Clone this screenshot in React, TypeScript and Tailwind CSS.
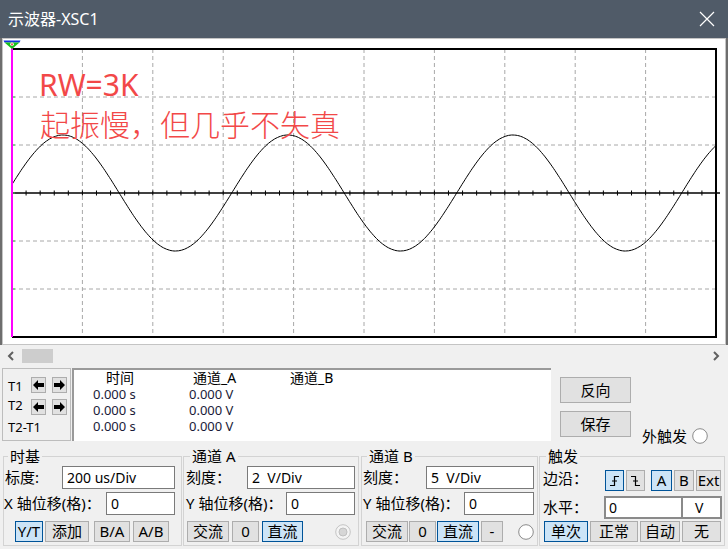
import React from 'react';

// page coordinates of the scope graticule
const GX0 = 12;
const GX1 = 716;
const GY0 = 49;
const GY1 = 337;
const DIVX = (GX1 - GX0) / 10;
const DIVY = (GY1 - GY0) / 6;

function sinePath() {
  const pts: string[] = [];
  for (let x = GX0; x <= GX1; x += 1.5) {
    const y = 193 - 58 * Math.sin((2 * Math.PI * (x - 6.7)) / 225);
    pts.push(`${x.toFixed(1)},${y.toFixed(1)}`);
  }
  return 'M' + pts.join(' L');
}

const Btn: React.FC<{ w: string; active?: boolean; className?: string; children: React.ReactNode }> = ({
  w,
  active,
  className = '',
  children,
}) => (
  <div
    className={`${w} h-[21px] flex items-center justify-center border text-[15px] leading-none ${
      active ? 'bg-[#cce4f7] border-[#005499]' : 'bg-[#e1e1e1] border-[#adadad]'
    } ${className}`}
  >
    {children}
  </div>
);

const Box: React.FC<{ w: string; children: React.ReactNode }> = ({ w, children }) => (
  <div className={`${w} h-[23px] bg-white border border-[#7a7a7a] flex items-center pl-[4px] text-[14px]`}>
    {children}
  </div>
);

const Radio: React.FC<{ disabled?: boolean; className?: string }> = ({ disabled, className = '' }) => (
  <svg width="16" height="16" viewBox="0 0 16 16" className={className}>
    <circle cx="8" cy="8" r="7.3" fill={disabled ? '#f4f4f4' : '#ffffff'} stroke={disabled ? '#c4c4c4' : '#8a8a8a'} />
    {disabled && <circle cx="8" cy="8" r="4" fill="#d6d6d6" stroke="#c0c0c0" />}
  </svg>
);

const Arrow: React.FC<{ dir: 'l' | 'r' }> = ({ dir }) => (
  <div className="w-[15px] h-[16px] bg-[#e1e1e1] border border-[#adadad] flex items-center justify-center">
    <svg width="11" height="10" viewBox="0 0 11 10">
      {dir === 'l' ? (
        <path d="M0 5 L5 0 L5 3 L11 3 L11 7 L5 7 L5 10 Z" fill="#000" />
      ) : (
        <path d="M11 5 L6 0 L6 3 L0 3 L0 7 L6 7 L6 10 Z" fill="#000" />
      )}
    </svg>
  </div>
);

const Scope: React.FC = () => {
  const vx = Array.from({ length: 9 }, (_, i) => GX0 + DIVX * (i + 1));
  const hy = [1, 2, 4, 5].map((i) => GY0 + DIVY * i);
  const ticks = Array.from({ length: 51 }, (_, i) => GX0 + (DIVX / 5) * i);
  return (
    <svg width="722" height="305" className="block">
      <g transform="translate(-3,-39)">
        {vx.map((x) => (
          <line key={x} x1={x} y1={GY0} x2={x} y2={GY1} stroke="#a8a8a8" strokeDasharray="4 3" />
        ))}
        {hy.map((y) => (
          <line key={y} x1={GX0} y1={y} x2={GX1} y2={y} stroke="#a8a8a8" strokeDasharray="4 3" />
        ))}
        <line x1={GX0} y1={193} x2={720} y2={193} stroke="#000" strokeWidth="1.6" />
        {ticks.map((x) => (
          <line key={x} x1={x} y1={190.5} x2={x} y2={195.5} stroke="#000" />
        ))}
        <path d={sinePath()} fill="none" stroke="#000" strokeWidth="1" />
        <line x1={GX0} y1={GY0} x2={GX1 + 1} y2={GY0} stroke="#000" strokeWidth="2" />
        <line x1={GX1} y1={GY0} x2={GX1} y2={GY1} stroke="#000" strokeWidth="2" />
        <line x1={GX0} y1={GY1} x2={GX1 + 1} y2={GY1} stroke="#000" strokeWidth="2" />
        {hy.concat([193]).map((y) => (
          <line key={'g' + y} x1={GX0} y1={y} x2={GX0 + 3} y2={y} stroke="#2ecc40" strokeWidth="1" />
        ))}
        <line x1={GX0} y1={43} x2={GX0} y2={GY1} stroke="#ff00ff" strokeWidth="2" />
        <path d="M3.5 40.5 L20.5 40.5 L19.5 42.5 L4.5 42.5 Z" fill="#1030e0" />
        <path d="M4.5 42.5 L19.5 42.5 L12 49 Z" fill="#18c018" />
        <circle cx="12" cy="44.3" r="1.8" fill="#ffffff" />
        <rect x="11.3" y="43.4" width="1.4" height="2" fill="#e02020" />
      </g>
    </svg>
  );
};

const App: React.FC = () => {
  return (
    <div className="w-[728px] h-[549px] overflow-hidden bg-[#f0f0f0] text-black font-['Noto_Sans','Noto_Sans_CJK_SC',sans-serif]">
      {/* Title bar */}
      <div className="h-[38px] bg-[#505b68] flex items-center justify-between pl-[8px] pr-[13px]">
        <span className="text-white text-[16px] leading-none">示波器-XSC1</span>
        <svg width="16" height="16" viewBox="0 0 16 16">
          <path d="M1 1 L15 15 M15 1 L1 15" stroke="#ffffff" strokeWidth="1.2" />
        </svg>
      </div>

      {/* Plot */}
      <div className="h-[307px] border-x-2 border-[#6e6e6e]">
        <div className="relative h-full border border-[#c4c4c4] bg-white">
          <Scope />
          <div className="absolute left-[36px] top-[31px] text-[#f24848] text-[30px] leading-[30px]">RW=3K</div>
          <div className="absolute left-[37px] top-[69px] text-[#f24848] text-[30px] leading-[30px] font-light font-['Noto_Sans_CJK_SC',sans-serif]">
            起振慢，但几乎不失真
          </div>
        </div>
      </div>

      {/* Scrollbar */}
      <div className="h-[22px] flex items-center">
        <svg width="22" height="14" viewBox="0 0 22 14">
          <path d="M13 3 L9 7 L13 11" fill="none" stroke="#606060" strokeWidth="2" />
        </svg>
        <div className="w-[31px] h-[14px] bg-[#cdcdcd]" />
        <div className="flex-1" />
        <svg width="22" height="14" viewBox="0 0 22 14">
          <path d="M8 3 L12 7 L8 11" fill="none" stroke="#606060" strokeWidth="2" />
        </svg>
      </div>

      {/* Cursor readout */}
      <div className="h-[79px] pt-[1px] flex">
        <div className="ml-[2px] w-[69px] h-[73px] border border-[#bdbdbd] pt-[8px] text-[13px] leading-none">
          <div className="flex items-center h-[16px]">
            <span className="w-[28px] pl-[5px] mt-[3px]">T1</span>
            <Arrow dir="l" />
            <div className="w-[6px]" />
            <Arrow dir="r" />
          </div>
          <div className="flex items-center h-[16px] mt-[6px]">
            <span className="w-[28px] pl-[5px] -mt-[4px]">T2</span>
            <Arrow dir="l" />
            <div className="w-[6px]" />
            <Arrow dir="r" />
          </div>
          <div className="h-[16px] mt-[4px] pl-[5px] flex items-center">T2-T1</div>
        </div>

        <div className="ml-[1px] w-[479px] h-[73px] bg-white border-t-2 border-l-2 border-[#9a9a9a] pl-[19px] grid grid-cols-[96px_101px_1fr] auto-rows-[16px] items-center leading-none">
          <span className="ml-[13px] text-[14px]">时间</span>
          <span className="ml-[4px] text-[14px]">通道_A</span>
          <span className="text-[14px]">通道_B</span>
          <span className="text-[13px] text-[#1a1a38]">0.000 s</span>
          <span className="text-[13px] text-[#1a1a38]">0.000 V</span>
          <span />
          <span className="text-[13px] text-[#1a1a38]">0.000 s</span>
          <span className="text-[13px] text-[#1a1a38]">0.000 V</span>
          <span />
          <span className="text-[13px] text-[#1a1a38]">0.000 s</span>
          <span className="text-[13px] text-[#1a1a38]">0.000 V</span>
          <span />
        </div>

        <div className="ml-[9px] pt-[9px] flex flex-col">
          <div className="w-[71px] h-[26px] bg-[#e1e1e1] border border-[#adadad] flex items-center justify-center text-[15px]">
            反向
          </div>
          <div className="w-[71px] h-[26px] mt-[8px] bg-[#e1e1e1] border border-[#adadad] flex items-center justify-center text-[15px]">
            保存
          </div>
        </div>
        <div className="ml-[11px] self-end flex items-center text-[15px] leading-[18px] pb-[1px]">
          外触发
          <Radio className="ml-[5px]" />
        </div>
      </div>

      {/* Control groups */}
      <div className="flex text-[15px] leading-none">
        {/* 时基 */}
        <fieldset className="ml-[3px] w-[179px] border border-[#d3d3d3] pb-[3px]">
          <legend className="ml-[4px] px-[2px] leading-[20px]">时基</legend>
          <div className="flex items-center h-[23px]">
            <span className="w-[58px] pl-[1px]">标度:</span>
            <Box w="w-[113px]">200 us/Div</Box>
          </div>
          <div className="flex items-center h-[23px] mt-[3px]">
            <span className="w-[102px]">X 轴位移(格)：</span>
            <Box w="w-[69px]">0</Box>
          </div>
          <div className="flex items-center mt-[6px] pl-[11px]">
            <Btn w="w-[28px]" active className="text-[14px]">
              Y/T
            </Btn>
            <Btn w="w-[44px]" className="ml-[2px]">
              添加
            </Btn>
            <Btn w="w-[36px]" className="ml-[5px] text-[14px]">
              B/A
            </Btn>
            <Btn w="w-[36px]" className="ml-[3px] text-[14px]">
              A/B
            </Btn>
          </div>
        </fieldset>

        {/* 通道 A */}
        <fieldset className="ml-[1px] w-[176px] border border-[#d3d3d3] pb-[3px]">
          <legend className="ml-[6px] px-[2px] leading-[20px]">通道 A</legend>
          <div className="flex items-center h-[23px]">
            <span className="w-[63px] pl-[2px]">刻度：</span>
            <Box w="w-[108px]">2&nbsp; V/Div</Box>
          </div>
          <div className="flex items-center h-[23px] mt-[3px]">
            <span className="w-[102px] pl-[2px]">Y 轴位移(格)：</span>
            <Box w="w-[69px]">0</Box>
          </div>
          <div className="flex items-center mt-[6px] pl-[3px]">
            <Btn w="w-[42px]">交流</Btn>
            <Btn w="w-[27px]" className="ml-[3px] text-[14px]">
              0
            </Btn>
            <Btn w="w-[41px]" active className="ml-[3px]">
              直流
            </Btn>
            <Radio disabled className="ml-[32px]" />
          </div>
        </fieldset>

        {/* 通道 B */}
        <fieldset className="ml-[2px] w-[177px] border border-[#d3d3d3] pb-[3px]">
          <legend className="ml-[5px] px-[2px] leading-[20px]">通道 B</legend>
          <div className="flex items-center h-[23px]">
            <span className="w-[64px] pl-[1px]">刻度：</span>
            <Box w="w-[108px]">5&nbsp; V/Div</Box>
          </div>
          <div className="flex items-center h-[23px] mt-[3px]">
            <span className="w-[102px] pl-[1px]">Y 轴位移(格)：</span>
            <Box w="w-[70px]">0</Box>
          </div>
          <div className="flex items-center mt-[6px] pl-[4px]">
            <Btn w="w-[42px]">交流</Btn>
            <Btn w="w-[27px]" className="ml-[1px] text-[14px]">
              0
            </Btn>
            <Btn w="w-[42px]" active className="ml-[1px]">
              直流
            </Btn>
            <Btn w="w-[22px]" className="ml-[2px] text-[14px]">
              -
            </Btn>
            <Radio className="ml-[15px]" />
          </div>
        </fieldset>

        {/* 触发 */}
        <fieldset className="ml-[1px] w-[186px] border border-[#d3d3d3] pb-[3px]">
          <legend className="ml-[6px] px-[2px] leading-[20px]">触发</legend>
          <div className="flex items-end h-[25px]">
            <span className="w-[65px] pl-[3px] self-center">边沿：</span>
            <Btn w="w-[19px]" active>
              <svg width="11" height="12" viewBox="0 0 11 12">
                <path d="M1 10.5 H5.5 V1.5 H10 M3 6 H8" fill="none" stroke="#000" strokeWidth="1.2" />
              </svg>
            </Btn>
            <Btn w="w-[19px]" className="ml-[2px]">
              <svg width="11" height="12" viewBox="0 0 11 12">
                <path d="M1 1.5 H5.5 V10.5 H10 M3 6 H8" fill="none" stroke="#000" strokeWidth="1.2" />
              </svg>
            </Btn>
            <Btn w="w-[21px]" active className="ml-[6px]">
              A
            </Btn>
            <Btn w="w-[20px]" className="ml-[2px]">
              B
            </Btn>
            <Btn w="w-[25px]" className="ml-[2px] text-[14px]">
              Ext
            </Btn>
          </div>
          <div className="flex items-center h-[23px] mt-[5px]">
            <span className="w-[64px] pl-[3px]">水平：</span>
            <div className="w-[79px] h-[23px] bg-white border-2 border-[#8a8a8a] flex items-center pl-[3px] text-[14px]">0</div>
            <div className="w-[39px] h-[23px] bg-white border-y-2 border-r-2 border-[#8a8a8a] flex items-center pl-[12px] text-[14px]">
              V
            </div>
          </div>
          <div className="flex items-center mt-[2px] pl-[4px]">
            <Btn w="w-[44px]" active>
              单次
            </Btn>
            <Btn w="w-[48px]" className="ml-[2px]">
              正常
            </Btn>
            <Btn w="w-[40px]" className="ml-[2px]">
              自动
            </Btn>
            <Btn w="w-[39px]" className="ml-[2px]">
              无
            </Btn>
          </div>
        </fieldset>
      </div>
    </div>
  );
};

export default App;
